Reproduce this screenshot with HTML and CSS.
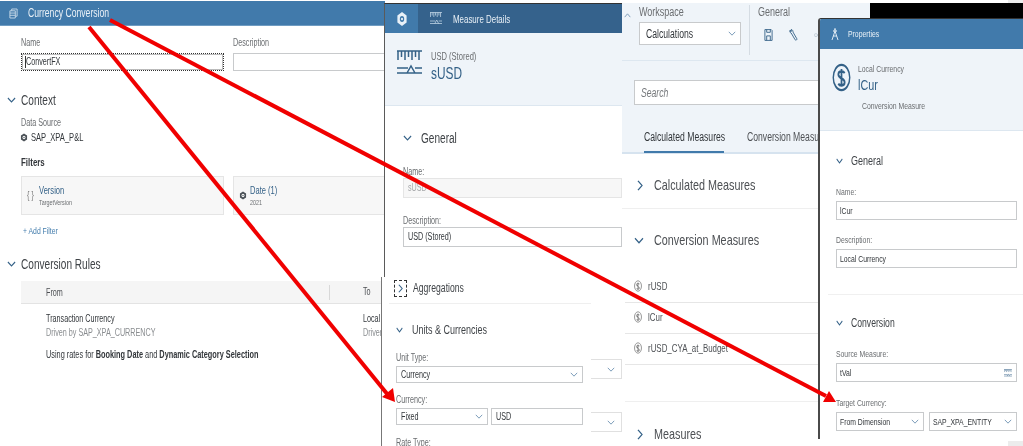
FILE: index.html
```html
<!DOCTYPE html>
<html lang="en">
<head>
<meta charset="utf-8">
<title>Currency Conversion</title>
<link rel="stylesheet" href="styles.css">
</head>
<body>
<svg width="0" height="0" class="defs">
  <symbol id="chev-d" viewBox="0 0 10 6" preserveAspectRatio="none"><path d="M1 1l4 4 4-4" fill="none" stroke="currentColor" stroke-width="1.2"/></symbol>
  <symbol id="chev-r" viewBox="0 0 6 12" preserveAspectRatio="none"><path d="M1 1l4 5-4 5" fill="none" stroke="currentColor" stroke-width="1.3"/></symbol>
  <symbol id="cube" viewBox="0 0 12 12" preserveAspectRatio="none"><path d="M6 .8l4.600 2.600v5.200L6 11.200 1.400 8.600V3.400z" fill="currentColor"/><circle cx="6" cy="6" r="2.200" fill="var(--hole, #fff)"/><circle cx="6" cy="6" r="1" fill="currentColor"/></symbol>
  <symbol id="dollar" viewBox="0 0 12 12" preserveAspectRatio="none"><circle cx="6" cy="6" r="5.200" fill="none" stroke="currentColor" stroke-width=".9"/><path d="M8 4.200C7.500 3.400 4 3 4 4.700c0 2 4 1.500 4 3.300 0 1.800-3.500 1.400-4 .5M6 2.500v7" fill="none" stroke="currentColor" stroke-width="1.100"/></symbol>
  <symbol id="measure" viewBox="0 0 25 26" preserveAspectRatio="none"><path d="M0 1h25M1 1v9M4.500 1v6M8 1v9M11.500 1v6M15 1v9M18.500 1v6M22 1v9M0 18h11M18 18h7M0 23h25M10 23l4-7 4 7" fill="none" stroke="currentColor" stroke-width="1.500"/></symbol>
</svg>

<section class="win win-conv">
  <header class="bar bar-conv">
    <svg class="ic-stack" viewBox="0 0 10 12"><path d="M1 3h6v8H1zM3 3V1h6v8H7M1 5.500h6M1 8h6" fill="none" stroke="currentColor"/></svg>
    <h1 class="bar-title"><span class="t">Currency Conversion</span></h1>
  </header>
  <div class="conv-body">
    <div class="two-col">
      <div class="field"><span class="lbl"><span class="t">Name</span></span><div class="inp inp-focus"><span class="t">ConvertFX</span></div></div>
      <div class="field"><span class="lbl"><span class="t">Description</span></span><div class="inp"></div></div>
    </div>
    <h2 class="sec sec-context"><svg class="chev"><use href="#chev-d"/></svg><span class="t">Context</span></h2>
    <div class="lbl ds-label"><span class="t">Data Source</span></div>
    <div class="ds"><svg class="ic-cube"><use href="#cube"/></svg><span class="t">SAP_XPA_P&amp;L</span></div>
    <h3 class="filters"><span class="t">Filters</span></h3>
    <div class="two-col">
      <div class="card"><span class="braces"><span class="t">{ }</span></span><div><div class="card-t"><span class="t">Version</span></div><div class="card-s"><span class="t">TargetVersion</span></div></div></div>
      <div class="card"><svg class="ic-cube"><use href="#cube"/></svg><div><div class="card-t"><span class="t">Date (1)</span></div><div class="card-s"><span class="t">2021</span></div></div></div>
    </div>
    <div class="add"><span class="t">+ Add Filter</span></div>
    <h2 class="sec sec-rules"><svg class="chev"><use href="#chev-d"/></svg><span class="t">Conversion Rules</span></h2>
    <div class="thead"><span class="th-from"><span class="t">From</span></span><span class="th-to"><span class="t">To</span></span></div>
    <div class="trow">
      <div class="tcol-from"><div class="cell-m"><span class="t">Transaction Currency</span></div><div class="cell-s"><span class="t">Driven by SAP_XPA_CURRENCY</span></div></div>
      <div class="tcol-to"><div class="cell-m"><span class="t">Local Currency</span></div><div class="cell-s"><span class="t">Driven by</span></div></div>
    </div>
    <p class="rates"><span class="t">Using rates for <b>Booking Date</b> and <b>Dynamic Category Selection</b></span></p>
  </div>
</section>

<section class="win win-detail">
  <header class="bar bar-detail">
    <span class="tab-ic"><svg class="ic-tab"><use href="#cube"/></svg></span>
    <svg class="ic-mini"><use href="#measure"/></svg>
    <h2 class="bar-title title-sm"><span class="t">Measure Details</span></h2>
  </header>
  <div class="sub sub-detail">
    <svg class="ic-measure"><use href="#measure"/></svg>
    <div><div class="sub-small"><span class="t">USD (Stored)</span></div><div class="sub-big"><span class="t">sUSD</span></div></div>
  </div>
  <div class="detail-body">
    <h2 class="sec sec-general"><svg class="chev"><use href="#chev-d"/></svg><span class="t">General</span></h2>
    <div class="lbl lbl-f"><span class="t">Name:</span></div>
    <div class="inp inp-off"><span class="t">sUSD</span></div>
    <div class="lbl lbl-f lbl-gap"><span class="t">Description:</span></div>
    <div class="inp"><span class="t">USD (Stored)</span></div>
    <div class="ghost-sel ghost-a"><svg class="chev-sm"><use href="#chev-d"/></svg></div>
    <div class="ghost-sel ghost-b"><svg class="chev-sm"><use href="#chev-d"/></svg></div>
  </div>
</section>

<section class="win win-units">
  <div class="agg"><span class="agg-box"><svg class="chev-r"><use href="#chev-r"/></svg></span><span class="t">Aggregations</span></div>
  <h2 class="sec sec-units"><svg class="chev"><use href="#chev-d"/></svg><span class="t">Units &amp; Currencies</span></h2>
  <div class="lbl lbl-unit"><span class="t">Unit Type:</span></div>
  <div class="inp sel"><span class="t">Currency</span><svg class="chev-sm"><use href="#chev-d"/></svg></div>
  <div class="lbl lbl-cur"><span class="t">Currency:</span></div>
  <div class="pair">
    <div class="inp sel"><span class="t">Fixed</span><svg class="chev-sm"><use href="#chev-d"/></svg></div>
    <div class="inp"><span class="t">USD</span></div>
  </div>
  <div class="lbl lbl-rate"><span class="t">Rate Type:</span></div>
</section>

<section class="win win-work">
  <div class="toolbar">
    <span class="caret"><svg class="chev-up"><use href="#chev-d"/></svg></span>
    <div class="tool-group">
      <div class="tool-h"><span class="t">Workspace</span></div>
      <div class="inp sel work-sel"><span class="t">Calculations</span><svg class="chev-sm"><use href="#chev-d"/></svg></div>
    </div>
    <div class="tool-group tool-general">
      <div class="tool-h"><span class="t">General</span></div>
      <div class="tool-icons">
        <svg class="ic-tool" viewBox="0 0 10 14"><path d="M1 1h7l1 1v11H1zM3 1v3h4V1M3 13V8h4v5" fill="none" stroke="currentColor"/></svg>
        <svg class="ic-tool" viewBox="0 0 10 14"><path d="M1.500 1.500c-1 1-.7 3 .9 3.300L6.800 12.300c.8 1 2.400 0 1.900-1.100L4.400 3.700C4.600 2.300 3.700 1 2.600.8v2.200H1.500z" fill="none" stroke="currentColor"/></svg>
        <span class="ic-link">∞</span>
      </div>
    </div>
  </div>
  <div class="search-area">
    <div class="search"><span class="t">Search</span></div>
    <div class="tabs"><span class="tab tab-on"><span class="t">Calculated Measures</span></span><span class="tab"><span class="t">Conversion Measures</span></span></div>
  </div>
  <div class="row-sec row-first"><svg class="chev-r chev-big"><use href="#chev-r"/></svg><span class="t">Calculated Measures</span></div>
  <div class="row-sec row-conv"><svg class="chev chev-l"><use href="#chev-d"/></svg><span class="t">Conversion Measures</span></div>
  <div class="m-row m-first"><svg class="ic-dollar"><use href="#dollar"/></svg><span class="t">rUSD</span></div>
  <div class="m-row"><svg class="ic-dollar"><use href="#dollar"/></svg><span class="t">lCur</span></div>
  <div class="m-row"><svg class="ic-dollar"><use href="#dollar"/></svg><span class="t">rUSD_CYA_at_Budget</span></div>
  <div class="m-empty"></div>
  <div class="row-sec row-meas"><svg class="chev-r chev-big"><use href="#chev-r"/></svg><span class="t">Measures</span></div>
</section>

<div class="win black-bar"></div>
<div class="win corner corner-top"></div>
<div class="win corner corner-bottom"></div>

<section class="win win-props">
  <header class="bar bar-props">
    <svg class="ic-comp" viewBox="0 0 8 14"><path d="M4 1v3M4 4L1 13M4 4l3 9M2 9h4" fill="none" stroke="currentColor"/><circle cx="4" cy="4" r="1.300" fill="none" stroke="currentColor"/></svg>
    <h2 class="bar-title title-xs"><span class="t">Properties</span></h2>
  </header>
  <div class="sub sub-props">
    <svg class="ic-big-dollar"><use href="#dollar"/></svg>
    <div><div class="sub-small"><span class="t">Local Currency</span></div><div class="sub-big"><span class="t">lCur</span></div><div class="sub-note"><span class="t">Conversion Measure</span></div></div>
  </div>
  <div class="props-body">
    <h2 class="sec sec-pgen"><svg class="chev"><use href="#chev-d"/></svg><span class="t">General</span></h2>
    <div class="lbl"><span class="t">Name:</span></div>
    <div class="inp"><span class="t">lCur</span></div>
    <div class="lbl lbl-pdesc"><span class="t">Description:</span></div>
    <div class="inp"><span class="t">Local Currency</span></div>
  </div>
  <div class="props-body props-conv">
    <h2 class="sec sec-pconv"><svg class="chev"><use href="#chev-d"/></svg><span class="t">Conversion</span></h2>
    <div class="lbl"><span class="t">Source Measure:</span></div>
    <div class="inp sel"><span class="t">tVal</span><svg class="ic-src"><use href="#measure"/></svg></div>
    <div class="lbl lbl-target"><span class="t">Target Currency:</span></div>
    <div class="pair pair-p">
      <div class="inp sel"><span class="t">From Dimension</span><svg class="chev-sm"><use href="#chev-d"/></svg></div>
      <div class="inp sel"><span class="t">SAP_XPA_ENTITY</span><svg class="chev-sm"><use href="#chev-d"/></svg></div>
    </div>
  </div>
</section>

<svg class="arrows" viewBox="0 0 1023 446" width="1023" height="446">
  <line x1="89" y1="27" x2="388" y2="395" class="arrow"/>
  <polygon points="395,402 382,397 393,388" class="head"/>
  <line x1="110" y1="20" x2="826" y2="396" class="arrow"/>
  <polygon points="836,402 823,402 829,391" class="head"/>
</svg>
</body>
</html>
```
FILE: styles.css
```css
* { box-sizing: border-box; }
html, body { margin: 0; padding: 0; }
body {
  position: relative;
  width: 1023px;
  height: 446px;
  overflow: hidden;
  background: #fff;
  color: #32363a;
  font-family: "Liberation Sans", Arial, sans-serif;
  font-size: 10px;
  line-height: 12px;
}
h1, h2, h3, p { margin: 0; font-weight: normal; }
.defs { position: absolute; }
.win { position: absolute; overflow: hidden; background: #fff; filter: blur(.35px); }

/* The source captures are horizontally squeezed, so text is condensed the same way */
.t { display: inline-block; white-space: nowrap; transform: scaleX(.72); transform-origin: 0 50%; }

.bar { display: flex; align-items: center; color: #fff; }
.bar-title { font-size: 12px; line-height: 14px; color: #eaf1f7; }
.title-sm { font-size: 11px; }
.title-xs { font-size: 9.500px; }

.lbl { display: block; color: #6a6d70; font-size: 10px; line-height: 12px; }
.inp {
  display: flex;
  align-items: center;
  height: 19px;
  padding: 0 4px;
  background: #fff;
  border: 1px solid #c8cacc;
  color: #32363a;
  font-size: 10px;
}
.sel { justify-content: space-between; }
.sel > .t { flex: 1 1 0; width: 0; min-width: 0; }
.chev-sm { width: 8px; height: 5px; color: #7a9bb8; flex: none; }
.chev { width: 9px; height: 6px; color: #346187; flex: none; }
.chev-r { width: 6px; height: 11px; color: #346187; flex: none; }
.sec { display: flex; align-items: center; font-size: 14px; line-height: 16px; color: #3f4347; }

/* Currency conversion window */
.win-conv { left: 0; top: 1px; width: 385px; height: 445px; }
.bar-conv { height: 25px; padding-left: 9px; background: #417aab; border-bottom: 1px solid #6f9cc2; }
.ic-stack { width: 9px; height: 11px; margin-right: 10px; color: #c9dbea; }
.conv-body { padding: 11px 0 0 21px; }
.two-col { display: grid; grid-template-columns: 203px 203px; gap: 9px; }
.field { display: flex; flex-direction: column; gap: 4px; }
.field .inp { height: 18px; }
.inp-focus { padding-left: 3px; border: 1px dotted #333; box-shadow: 0 0 0 1px #bbb inset; }
.inp-focus::before { content: ""; width: 1px; height: 12px; background: #333; flex: none; }
.sec-context { margin: 21px 0 0 -14px; gap: 5px; }
.ds-label { margin-top: 9px; }
.ds { display: flex; align-items: center; gap: 3px; margin: 2px 0 0 -1px; font-size: 10.500px; }
.ic-cube { width: 8px; height: 9px; color: #4b5157; flex: none; }
.filters { margin-top: 12px; font-size: 11px; line-height: 14px; font-weight: 700; }
.card {
  display: flex;
  align-items: center;
  gap: 3px;
  height: 39px;
  margin-top: 7px;
  padding-left: 5px;
  background: #f7f7f7;
  border: 1px solid #e5e5e5;
}
.braces { width: 9px; color: #777; font-size: 10px; }
.card-t { color: #346187; font-size: 10.500px; line-height: 13px; }
.card-s { color: #6a6d70; font-size: 7.500px; line-height: 11px; }
.add { margin: 9px 0 0 2px; color: #427cac; font-size: 9.500px; line-height: 14px; }
.sec-rules { margin: 18px 0 0 -14px; gap: 5px; }
.thead {
  display: flex;
  align-items: center;
  height: 23px;
  width: 364px;
  margin-top: 9px;
  padding-left: 25px;
  background: #f5f5f5;
  border-bottom: 1px solid #e3e3e3;
  color: #4d5054;
}
.th-from { flex: none; width: 284px; height: 15px; line-height: 15px; border-right: 1px solid #d8d8d8; }
.th-to { margin-left: 33px; }
.trow { display: flex; margin-top: 8px; padding-left: 25px; }
.tcol-from { flex: none; width: 317px; }
.tcol-to { white-space: nowrap; }
.cell-m { line-height: 14px; font-size: 10px; }
.cell-s { line-height: 13px; color: #8a8d90; font-size: 10px; }
.rates { margin: 9px 0 0 25px; font-size: 10.200px; line-height: 14px; }

/* Measure details window */
.win-detail { left: 384px; top: 3px; width: 238px; height: 443px; border-left: 1px solid #5a5a5a; border-top: 1px solid #333; }
.bar-detail { height: 29px; background: #35628c; }
.tab-ic { display: flex; align-items: center; justify-content: center; width: 33px; height: 29px; margin-right: 12px; background: #417aab; --hole: #417aab; }
.ic-tab { width: 12px; height: 16px; color: #e9f1f8; }
.ic-mini { width: 12px; height: 13px; margin-right: 11px; color: #c9dbea; }
.sub { background: #eff4f9; border-bottom: 1px solid #dde7f0; display: flex; }
.sub-detail { height: 73px; padding: 17px 0 0 12px; gap: 9px; }
.ic-measure { width: 25px; height: 26px; color: #346187; flex: none; }
.sub-small { color: #6a6d70; font-size: 10.500px; line-height: 13px; }
.sub-big { color: #346187; font-size: 16.500px; line-height: 21px; }
.detail-body { padding: 24px 0 0 18px; }
.sec-general { gap: 9px; }
.lbl-f { margin-top: 20px; }
.lbl-gap { margin-top: 17px; }
.detail-body > .inp { height: 20px; }
.inp-off { background: #f7f7f7; border-color: #e5e5e5; color: #a6a8aa; }
.ghost-sel { display: flex; align-items: center; justify-content: flex-end; height: 20px; padding-right: 6px; border: 1px solid #e0e0e0; }
.ghost-a { margin-top: 112px; }
.ghost-b { margin-top: 33px; }

/* Units window */
.win-units { left: 381px; top: 277px; width: 210px; height: 169px; padding-left: 14px; border-left: 1px solid #777; }
.agg { display: flex; align-items: center; gap: 6px; width: 203px; height: 27px; margin-left: -7px; padding: 0 0 4px 5px; border-bottom: 1px solid #efefef; font-size: 12px; color: #3f4347; }
.agg-box { display: flex; align-items: center; justify-content: center; width: 13px; height: 17px; border: 1px dashed #333; flex: none; }
.agg-box .chev-r { width: 5px; height: 9px; }
.sec-units { gap: 9px; margin-top: 18px; font-size: 12.500px; }
.sec-units .chev { width: 7px; }
.lbl-unit { margin-top: 14px; }
.win-units > .inp { width: 187px; height: 17px; margin-top: 2px; }
.lbl-cur { margin-top: 11px; }
.pair { display: grid; grid-template-columns: 92px 92px; gap: 3px; width: 187px; margin-top: 2px; }
.pair .inp { height: 17px; }
.lbl-rate { margin-top: 12px; }

/* Workspace window */
.win-work { left: 622px; top: 3px; width: 248px; height: 443px; }
.toolbar { display: flex; height: 58px; background: #eff4f9; border-bottom: 1px solid #dde7f0; padding-top: 2px; }
.caret { width: 17px; padding: 8px 0 0 2px; }
.chev-up { display: block; width: 7px; height: 5px; color: #7a9bb8; transform: rotate(180deg); }
.tool-group { width: 110px; padding-right: 8px; }
.tool-h { color: #6a6d70; font-size: 12.500px; line-height: 14px; }
.work-sel { width: 102px; height: 23px; margin-top: 3px; padding-left: 6px; font-size: 12px; }
.tool-general { width: 100px; height: 50px; padding-left: 8px; border-left: 1px solid #d5dce3; }
.tool-icons { display: flex; align-items: center; gap: 16px; padding: 9px 0 0 6px; color: #346187; }
.ic-tool { width: 9px; height: 14px; }
.ic-link { color: #bcc8d3; font-size: 10px; }
.search-area { height: 93px; padding: 19px 0 0 12px; background: #eff4f9; border-bottom: 2px solid #d6e3ef; }
.search { display: flex; align-items: center; height: 25px; padding-left: 6px; background: #fff; border: 1px solid #c8cacc; color: #74777a; font-size: 12px; font-style: italic; }
.tabs { display: flex; gap: 23px; margin-top: 24px; padding-left: 10px; }
.tab { height: 24px; font-size: 12px; line-height: 16px; white-space: nowrap; color: #4d5054; }
.tab-on { width: 80px; color: #32363a; border-bottom: 2px solid #417aab; }
.row-sec { display: flex; align-items: center; font-size: 15px; line-height: 18px; color: #4d5054; }
.chev-big { margin: 0 11px 0 15px; }
.chev-l { width: 10px; height: 7px; margin: 0 10px 0 12px; }
.row-first { height: 55px; padding-top: 8px; border-bottom: 1px solid #efefef; }
.row-conv { height: 32px; margin-top: 15px; }
.m-row { display: flex; align-items: center; gap: 6px; height: 31px; margin-left: 3px; padding: 0 0 2px 9px; border-bottom: 1px solid #e6e6e6; font-size: 11px; color: #4d5054; }
.m-first { margin-top: 16px; }
.m-empty { height: 37px; margin-left: 3px; border-bottom: 1px solid #efefef; }
.row-meas { height: 18px; margin-top: 23px; }
.ic-dollar { width: 8px; height: 12px; color: #777; flex: none; }

.black-bar { left: 870px; top: 3px; width: 153px; height: 16px; background: #000; }
.corner { background: #ececec; }
.corner-top { left: 1008px; top: 0; width: 15px; height: 3px; }
.corner-bottom { left: 1008px; top: 441px; width: 15px; height: 5px; }

/* Properties window */
.win-props { left: 818px; top: 18px; width: 205px; height: 421px; border-left: 2px solid #4a4a4a; border-top: 1px solid #333; border-top-left-radius: 3px; }
.bar-props { height: 30px; padding-left: 11px; background: #417aab; }
.ic-comp { width: 8px; height: 14px; margin-right: 9px; color: #dce8f2; }
.sub-props { height: 82px; padding: 14px 0 0 12px; gap: 7px; }
.ic-big-dollar { width: 19px; height: 29px; color: #346187; flex: none; }
.sub-props .sub-small { font-size: 9.500px; line-height: 12px; }
.sub-props .sub-big { font-size: 15px; line-height: 19px; }
.sub-note { margin: 6px 0 0 4px; color: #6a6d70; font-size: 9.500px; line-height: 12px; }
.props-body { padding: 0 6px 0 16px; }
.sec-pgen { gap: 8px; margin-top: 22px; font-size: 12.500px; line-height: 16px; }
.sec-pgen .chev, .sec-pconv .chev { width: 7px; }
.props-body > .lbl { font-size: 9.500px; }
.props-body .sec + .lbl { margin-top: 17px; }
.props-body > .inp { height: 19px; margin-top: 3px; padding-left: 3px; font-size: 9.500px; }
.lbl-pdesc { margin-top: 14px; }
.props-conv { margin: 26px 0 0 8px; padding: 20px 6px 0 8px; border-top: 1px solid #f0f0f0; }
.sec-pconv { gap: 8px; font-size: 12px; line-height: 16px; }
.ic-src { width: 8px; height: 8px; color: #346187; flex: none; }
.lbl-target { margin-top: 15px; }
.pair-p { grid-template-columns: 88px 88px; gap: 5px; width: 181px; margin-top: 3px; }
.pair-p .inp { height: 19px; padding-left: 3px; font-size: 9.500px; }

.arrows { position: absolute; left: 0; top: 0; pointer-events: none; }
.arrow { stroke: #f00000; stroke-width: 4; }
.head { fill: #f00000; }
```
